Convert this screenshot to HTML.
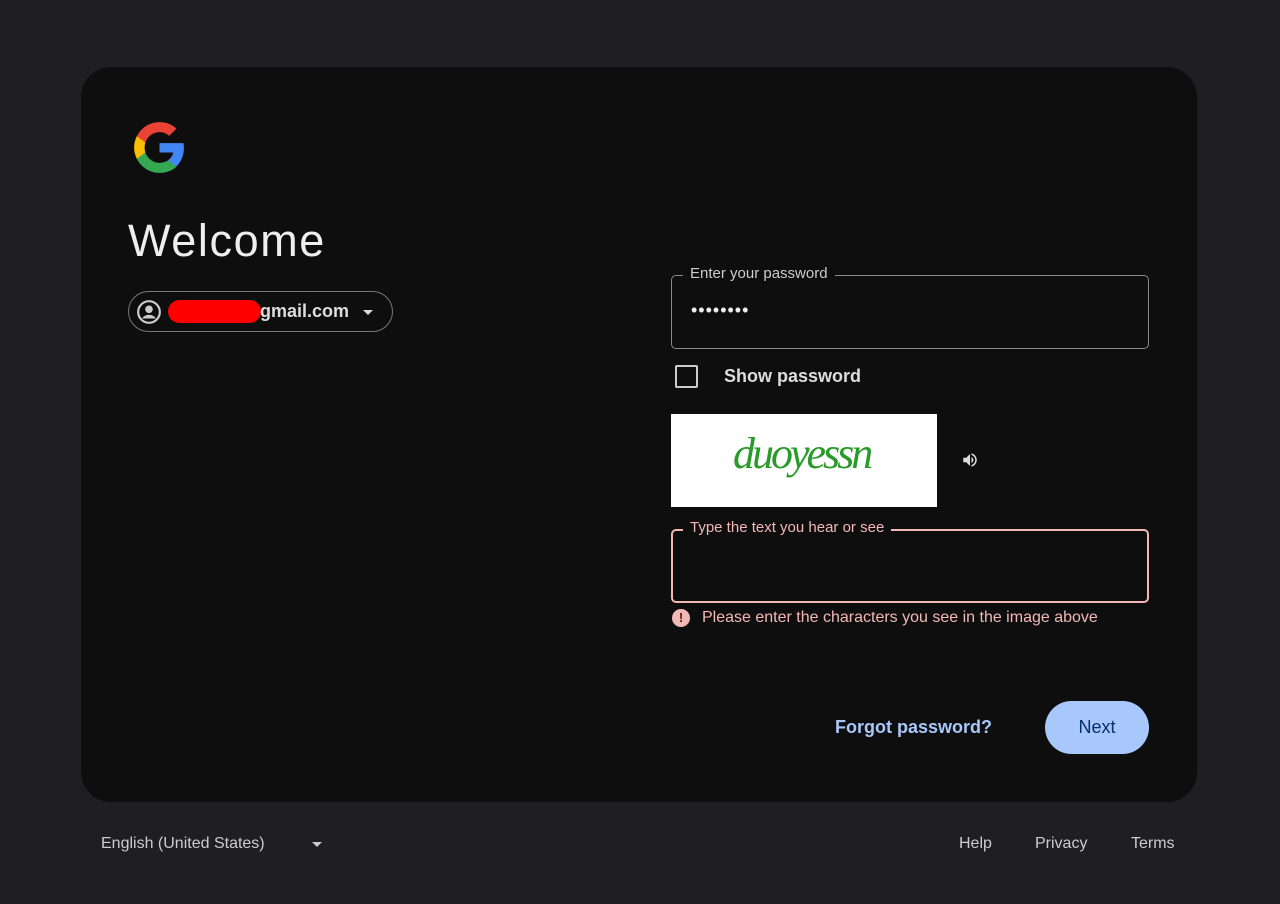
<!DOCTYPE html>
<html><head><meta charset="utf-8"><style>
*{box-sizing:border-box;margin:0;padding:0}
body{width:1280px;height:904px;background:#1f1f21;font-family:"Liberation Sans",sans-serif;position:relative;overflow:hidden;color:#e3e3e3}
.card{position:absolute;left:81px;top:67px;width:1116px;height:735px;background:#0e0e0f;border-radius:30px}
.abs{position:absolute}
</style></head><body>
<div class="card"></div>
<svg class="abs" style="left:133px;top:121px" width="53" height="53" viewBox="0 0 48 48">
<path fill="#4285F4" d="M46.1 24.5c0-1.6-.1-3.1-.4-4.5H24v8.5h12.4c-.5 2.9-2.2 5.3-4.6 6.9v5.7h7.5c4.3-4 6.8-9.9 6.8-16.6z"/>
<path fill="#34A853" d="M24 47c6.2 0 11.5-2.1 15.3-5.6l-7.5-5.7c-2.1 1.4-4.7 2.2-7.8 2.2-6 0-11-4-12.8-9.5H3.5v5.9C7.3 41.8 15 47 24 47z"/>
<path fill="#FBBC05" d="M11.2 28.4c-.5-1.4-.7-2.9-.7-4.4s.3-3 .7-4.4v-5.9H3.5C1.9 16.9 1 20.4 1 24s.9 7.1 2.5 10.3l7.7-5.9z"/>
<path fill="#EA4335" d="M24 10.1c3.4 0 6.4 1.2 8.8 3.4l6.6-6.6C35.5 3.2 30.2 1 24 1 15 1 7.3 6.2 3.5 13.7l7.7 5.9C13 14.1 18 10.1 24 10.1z"/>
</svg>
<div class="abs" style="left:128px;top:215px;font-size:45px;letter-spacing:1.6px;color:#eee">Welcome</div>
<div class="abs" style="left:128px;top:291px;width:265px;height:41px;border:1px solid #777;border-radius:21px"></div>
<svg class="abs" style="left:136px;top:299px" width="26" height="26" viewBox="0 0 24 24"><circle cx="12" cy="12" r="10" fill="none" stroke="#ccc" stroke-width="2"/><circle cx="12" cy="9.5" r="3.5" fill="#ccc"/><path d="M5.5 18c2-2.5 4-3.3 6.5-3.3s4.5.8 6.5 3.3" fill="#ccc"/></svg>
<div class="abs" style="left:168px;top:300px;width:93px;height:23px;background:#f00;border-radius:12px"></div>
<div class="abs" style="left:260px;top:301px;font-size:18px;font-weight:bold;color:#ddd">gmail.com</div>
<div class="abs" style="left:363px;top:310px;border-left:5px solid transparent;border-right:5px solid transparent;border-top:5px solid #ddd"></div>

<div class="abs" style="left:671px;top:275px;width:478px;height:74px;border:1px solid #888;border-radius:5px"></div>
<div class="abs" style="left:683px;top:265px;padding:0 7px;background:#0e0e0f;font-size:15px;color:#ccc">Enter your password</div>
<div class="abs" style="left:691px;top:300px;font-size:18px;letter-spacing:1px;color:#eee">••••••••</div>
<div class="abs" style="left:675px;top:365px;width:23px;height:23px;border:2px solid #ccc;border-radius:2px"></div>
<div class="abs" style="left:724px;top:366px;font-size:18px;font-weight:bold;color:#ddd">Show password</div>
<div class="abs" style="left:671px;top:414px;width:266px;height:93px;background:#fff"></div>
<div class="abs" style="left:733px;top:428px;font-family:'Liberation Serif',serif;font-style:italic;font-size:44px;color:#2a9a2a;letter-spacing:-3px">duoyessn</div>
<svg class="abs" style="left:960px;top:451px" width="20" height="18" viewBox="0 0 24 24"><path fill="#ddd" d="M3 9v6h4l5 5V4L7 9H3zm13.5 3c0-1.8-1-3.3-2.5-4v8c1.5-.7 2.5-2.2 2.5-4zM14 3.2v2.1c2.9.9 5 3.5 5 6.7s-2.1 5.8-5 6.7v2.1c4-.9 7-4.5 7-8.8s-3-7.9-7-8.8z"/></svg>
<div class="abs" style="left:671px;top:529px;width:478px;height:74px;border:2px solid #f2b8b5;border-radius:5px"></div>
<div class="abs" style="left:683px;top:519px;padding:0 7px;background:#0e0e0f;font-size:15px;color:#f2b8b5">Type the text you hear or see</div>
<div class="abs" style="left:672px;top:609px;width:18px;height:18px;border-radius:50%;background:#f2b8b5;color:#601410;font-size:13px;font-weight:bold;text-align:center;line-height:18px">!</div>
<div class="abs" style="left:702px;top:609px;font-size:16px;color:#f2b8b5">Please enter the characters you see in the image above</div>
<div class="abs" style="left:835px;top:717px;font-size:18px;font-weight:bold;color:#a8c7fa">Forgot password?</div>
<div class="abs" style="left:1045px;top:701px;width:104px;height:53px;background:#a8c7fa;border-radius:27px;color:#062e6f;font-size:18px;text-align:center;line-height:53px">Next</div>

<div class="abs" style="left:101px;top:835px;font-size:16px;color:#ccc">English (United States)</div>
<div class="abs" style="left:312px;top:842px;border-left:5px solid transparent;border-right:5px solid transparent;border-top:5px solid #ccc"></div>
<div class="abs" style="left:959px;top:835px;font-size:16px;color:#ccc">Help</div>
<div class="abs" style="left:1035px;top:835px;font-size:16px;color:#ccc">Privacy</div>
<div class="abs" style="left:1131px;top:835px;font-size:16px;color:#ccc">Terms</div>
</body></html>
